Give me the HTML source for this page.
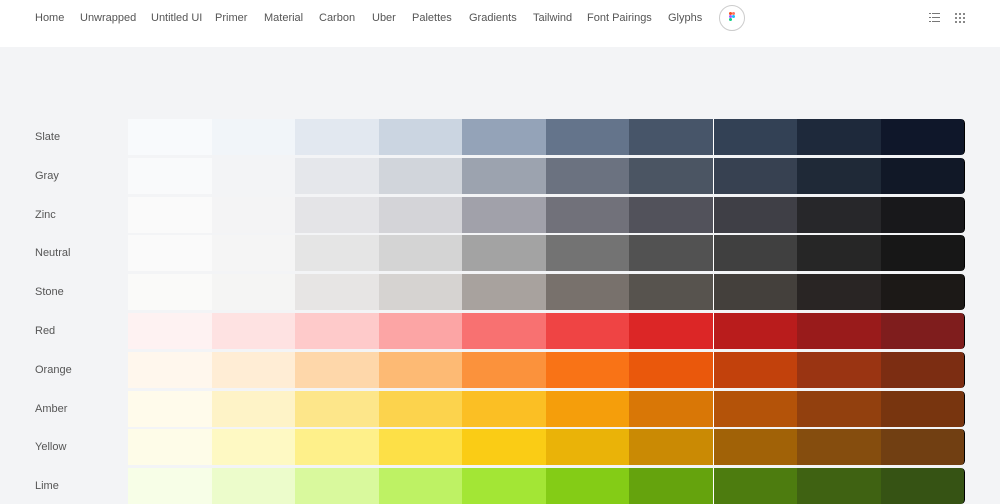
<!DOCTYPE html>
<html><head><style>
body{margin:0;width:1000px;height:500px;overflow:hidden;background:#f3f4f6;font-family:"Liberation Sans",Arial,sans-serif}
.nav{position:absolute;top:0;left:0;width:1000px;height:47px;background:#fff}
.nav a{position:absolute;top:12px;font-size:11px;color:#555;text-decoration:none}
.fig{position:absolute;left:719px;top:5px;width:24px;height:24px;border:1.5px solid #ccc;border-radius:50%}
.lbl{position:absolute;left:35px;font-size:11px;color:#555}
.row{position:absolute;left:128px;width:837px;height:36px;display:flex;border-radius:0 4px 4px 0;overflow:hidden}
.row div{flex:1}
.row div:nth-child(7){border-right:1px solid #fff}
.row div:last-child{border-right:1.5px solid #000;border-radius:0 4px 4px 0}
</style></head><body>
<div class="nav">
<a style="left:35px">Home</a><a style="left:80px">Unwrapped</a><a style="left:151px">Untitled UI</a><a style="left:215px">Primer</a><a style="left:264px">Material</a><a style="left:319px">Carbon</a><a style="left:372px">Uber</a><a style="left:412px">Palettes</a><a style="left:469px">Gradients</a><a style="left:533px">Tailwind</a><a style="left:587px">Font Pairings</a><a style="left:668px">Glyphs</a>
<div class="fig"><svg width="24" height="24" viewBox="0 0 24 24"><rect x="9" y="6" width="3" height="3" rx="1.5" fill="#f24e1e"/><rect x="12" y="6" width="3" height="3" rx="1.5" fill="#ff7262"/><rect x="9" y="9" width="3" height="3" rx="1.5" fill="#a259ff"/><circle cx="13.5" cy="10.5" r="1.5" fill="#1abcfe"/><rect x="9" y="12" width="3" height="3" rx="1.5" fill="#0acf83"/></svg></div>
<svg style="position:absolute;left:929px;top:12px" width="12" height="12"><g fill="#777"><rect x="0" y="1" width="2" height="1"/><rect x="3" y="1" width="8" height="1"/><rect x="0" y="5" width="2" height="1"/><rect x="3" y="5" width="8" height="1"/><rect x="0" y="9" width="2" height="1"/><rect x="3" y="9" width="8" height="1"/></g></svg>
<svg style="position:absolute;left:955px;top:13px" width="12" height="12"><g fill="#888"><rect x="0" y="0" width="2" height="2"/><rect x="4" y="0" width="2" height="2"/><rect x="8" y="0" width="2" height="2"/><rect x="0" y="4" width="2" height="2"/><rect x="4" y="4" width="2" height="2"/><rect x="8" y="4" width="2" height="2"/><rect x="0" y="8" width="2" height="2"/><rect x="4" y="8" width="2" height="2"/><rect x="8" y="8" width="2" height="2"/></g></svg>
</div>
<div id="p"></div>
<script>
var P=[["Slate","#f8fafc #f1f5f9 #e2e8f0 #cbd5e1 #94a3b8 #64748b #475569 #334155 #1e293b #0f172a"],
["Gray","#f9fafb #f3f4f6 #e5e7eb #d1d5db #9ca3af #6b7280 #4b5563 #374151 #1f2937 #111827"],
["Zinc","#fafafa #f4f4f5 #e4e4e7 #d4d4d8 #a1a1aa #71717a #52525b #3f3f46 #27272a #18181b"],
["Neutral","#fafafa #f5f5f5 #e5e5e5 #d4d4d4 #a3a3a3 #737373 #525252 #404040 #262626 #171717"],
["Stone","#fafaf9 #f5f5f4 #e7e5e4 #d6d3d1 #a8a29e #78716c #57534e #44403c #292524 #1c1917"],
["Red","#fef2f2 #fee2e2 #fecaca #fca5a5 #f87171 #ef4444 #dc2626 #b91c1c #991b1b #7f1d1d"],
["Orange","#fff7ed #ffedd5 #fed7aa #fdba74 #fb923c #f97316 #ea580c #c2410c #9a3412 #7c2d12"],
["Amber","#fffbeb #fef3c7 #fde68a #fcd34d #fbbf24 #f59e0b #d97706 #b45309 #92400e #78350f"],
["Yellow","#fefce8 #fef9c3 #fef08a #fde047 #facc15 #eab308 #ca8a04 #a16207 #854d0e #713f12"],
["Lime","#f7fee7 #ecfccb #d9f99d #bef264 #a3e635 #84cc16 #65a30d #4d7c0f #3f6212 #365314"]];
var h="";P.forEach(function(r,i){var y=Math.round(119+38.8*i);h+='<div class="lbl" style="top:'+(y+12)+'px">'+r[0]+'</div><div class="row" style="top:'+y+'px">';r[1].split(" ").forEach(function(c){h+='<div style="background:'+c+'"></div>'});h+='</div>'});
document.getElementById("p").innerHTML=h;
</script>
</body></html>
